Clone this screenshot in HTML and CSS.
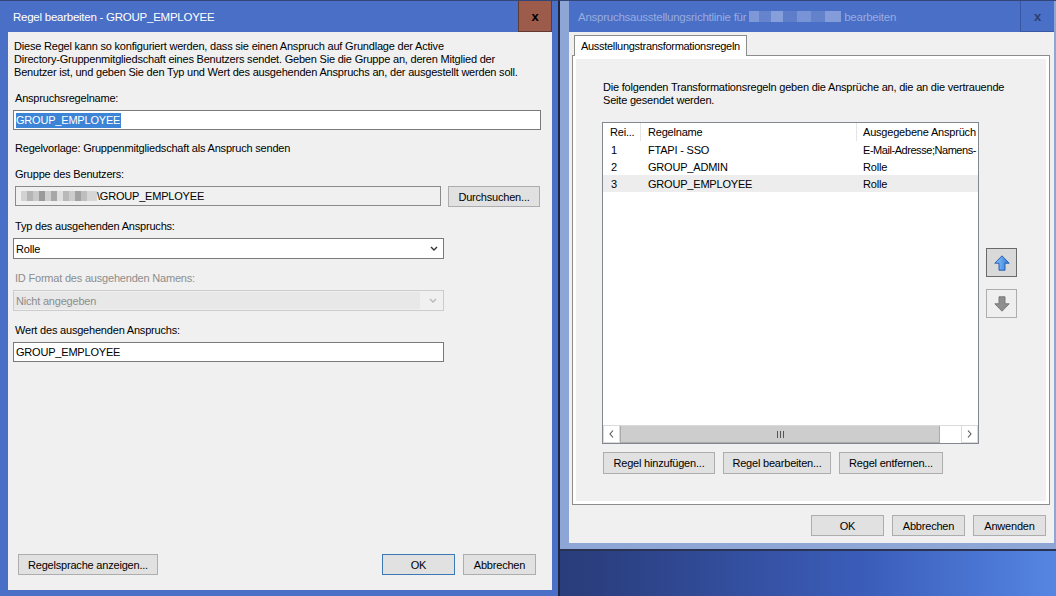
FILE: index.html
```html
<!DOCTYPE html>
<html lang="de">
<head>
    <meta charset="UTF-8">
    <title>Regel bearbeiten - GROUP_EMPLOYEE</title>
    <link rel="stylesheet" href="styles.css">
</head>
<body>
    <!-- Left window: edit single rule -->
    <div class="window rule-window">
        <div class="titlebar">
            <span class="title">Regel bearbeiten - GROUP_EMPLOYEE</span>
            <span class="close-btn">x</span>
        </div>
        <div class="client rule-client">
            <p class="intro">Diese Regel kann so konfiguriert werden, dass sie einen Anspruch auf Grundlage der Active<br>Directory-Gruppenmitgliedschaft eines Benutzers sendet. Geben Sie die Gruppe an, deren Mitglied der<br>Benutzer ist, und geben Sie den Typ und Wert des ausgehenden Anspruchs an, der ausgestellt werden soll.</p>

            <div class="field-label">Anspruchsregelname:</div>
            <div class="textbox full"><span class="selection">GROUP_EMPLOYEE</span></div>

            <div class="template">Regelvorlage: Gruppenmitgliedschaft als Anspruch senden</div>

            <div class="field-label">Gruppe des Benutzers:</div>
            <div class="group-row">
                <div class="textbox readonly"><span class="pixelated"></span>\GROUP_EMPLOYEE</div>
                <button type="button" class="btn browse-btn">Durchsuchen...</button>
            </div>

            <div class="field-label">Typ des ausgehenden Anspruchs:</div>
            <div class="combo">
                <span class="combo-value">Rolle</span>
                <svg class="chevron" width="8" height="5" viewBox="0 0 8 5"><path d="M1 1 L4 4 L7 1" fill="none" stroke="#333" stroke-width="1.4"/></svg>
            </div>

            <div class="field-label disabled">ID Format des ausgehenden Namens:</div>
            <div class="combo disabled">
                <span class="combo-value">Nicht angegeben</span>
                <svg class="chevron" width="8" height="5" viewBox="0 0 8 5"><path d="M1 1 L4 4 L7 1" fill="none" stroke="#b8b8b8" stroke-width="1.4"/></svg>
            </div>

            <div class="field-label">Wert des ausgehenden Anspruchs:</div>
            <div class="textbox half">GROUP_EMPLOYEE</div>

            <div class="dialog-footer">
                <button type="button" class="btn lang-btn">Regelsprache anzeigen...</button>
                <span class="spacer"></span>
                <button type="button" class="btn default">OK</button>
                <button type="button" class="btn">Abbrechen</button>
            </div>
        </div>
    </div>

    <!-- Right window: claim issuance policy -->
    <div class="window policy-window">
        <div class="titlebar inactive">
            <span class="title">Anspruchsausstellungsrichtlinie für <span class="pixelated title-blur"></span> bearbeiten</span>
            <span class="close-btn">x</span>
        </div>
        <div class="client policy-client">
            <div class="tabs">
                <span class="tab">Ausstellungstransformationsregeln</span>
            </div>
            <div class="tab-panel">
                <div class="tab-page">
                    <p class="page-intro">Die folgenden Transformationsregeln geben die Ansprüche an, die an die vertrauende<br>Seite gesendet werden.</p>

                    <div class="list-area">
                        <div class="listview">
                            <div class="list-row list-header">
                                <span class="col col-order">Rei...</span>
                                <span class="col col-name">Regelname</span>
                                <span class="col col-claims">Ausgegebene Ansprüch</span>
                            </div>
                            <div class="list-row">
                                <span class="col col-order">1</span>
                                <span class="col col-name">FTAPI - SSO</span>
                                <span class="col col-claims tight">E-Mail-Adresse;Namens-</span>
                            </div>
                            <div class="list-row">
                                <span class="col col-order">2</span>
                                <span class="col col-name">GROUP_ADMIN</span>
                                <span class="col col-claims">Rolle</span>
                            </div>
                            <div class="list-row selected">
                                <span class="col col-order">3</span>
                                <span class="col col-name">GROUP_EMPLOYEE</span>
                                <span class="col col-claims">Rolle</span>
                            </div>
                            <div class="list-fill"></div>
                            <div class="hscroll">
                                <span class="scroll-arrow">
                                    <svg width="5" height="8" viewBox="0 0 5 8"><path d="M4 0.5 L1 4 L4 7.5" fill="none" stroke="#555" stroke-width="1.1"/></svg>
                                </span>
                                <span class="scroll-thumb">
                                    <span class="grip"></span>
                                </span>
                                <span class="scroll-track"></span>
                                <span class="scroll-arrow">
                                    <svg width="5" height="8" viewBox="0 0 5 8"><path d="M1 0.5 L4 4 L1 7.5" fill="none" stroke="#555" stroke-width="1.1"/></svg>
                                </span>
                            </div>
                        </div>

                        <div class="order-buttons">
                            <button type="button" class="order-btn active">
                                <svg width="16" height="16" viewBox="0 0 16 16">
                                    <defs>
                                        <linearGradient id="blueArrow" x1="0" y1="0" x2="1" y2="0">
                                            <stop offset="0" stop-color="#8cc2f5"/>
                                            <stop offset="0.5" stop-color="#5da2ec"/>
                                            <stop offset="1" stop-color="#2f74d2"/>
                                        </linearGradient>
                                    </defs>
                                    <path d="M8 0.8 L15.2 8.2 L11 8.2 L11 15.2 L5 15.2 L5 8.2 L0.8 8.2 Z" fill="url(#blueArrow)" stroke="#2a5fb0" stroke-width="1"/>
                                </svg>
                            </button>
                            <button type="button" class="order-btn">
                                <svg width="16" height="16" viewBox="0 0 16 16">
                                    <path d="M5 0.8 L11 0.8 L11 7.8 L15.2 7.8 L8 15.2 L0.8 7.8 L5 7.8 Z" fill="#8e8e8e" stroke="#7a7a7a" stroke-width="1"/>
                                </svg>
                            </button>
                        </div>
                    </div>

                    <div class="rule-buttons">
                        <button type="button" class="btn add-btn">Regel hinzufügen...</button>
                        <button type="button" class="btn edit-btn">Regel bearbeiten...</button>
                        <button type="button" class="btn remove-btn">Regel entfernen...</button>
                    </div>
                </div>
            </div>
            <div class="policy-footer">
                <button type="button" class="btn">OK</button>
                <button type="button" class="btn">Abbrechen</button>
                <button type="button" class="btn">Anwenden</button>
            </div>
        </div>
    </div>
</body>
</html>
```

FILE: styles.css
```css
body {
    margin: 0;
    width: 1056px;
    height: 596px;
    overflow: hidden;
    position: relative;
    font-family: "Liberation Sans", Arial, sans-serif;
    font-size: 11px;
    letter-spacing: -0.2px;
    color: #000;
    background: linear-gradient(90deg, #24346a 0%, #2a3d7c 55%, #3b5dba 82%, #5585e2 100%);
}

/* windows on the desktop */
.window {
    position: absolute;
    top: 0;
    box-sizing: border-box;
}
.rule-window {
    left: 0;
    width: 560px;
    height: 596px;
    background: #4a6fc6;
    border-top: 1px solid #33467a;
    border-right: 2px solid #1d2642;
}
.policy-window {
    left: 560px;
    width: 496px;
    height: 551px;
    background: #8ea6d6;
    border-top: 1px solid #33467a;
    border-bottom: 2px solid #2a3352;
    padding: 0 2px 0 9px;
}

.titlebar {
    height: 31px;
    display: flex;
    align-items: center;
    background: #4a6fc6;
    position: relative;
}
.title {
    padding-left: 13px;
    font-size: 11.5px;
    letter-spacing: -0.25px;
    color: #fff;
    white-space: nowrap;
}
.titlebar.inactive .title {
    padding-left: 9px;
    color: #98acdf;
}
.close-btn {
    position: absolute;
    top: 0;
    right: 6px;
    width: 32px;
    height: 30px;
    background: #9d5b4b;
    border: 1px solid #5f3a33;
    border-top: none;
    font-weight: bold;
    font-size: 13px;
    letter-spacing: 0;
    display: flex;
    align-items: center;
    justify-content: center;
    color: #000;
}
.titlebar.inactive .close-btn {
    right: 0;
    width: 33px;
    background: #4a6fc6;
    border: none;
    border-left: 1px solid #3a57a4;
    border-bottom: 1px solid #3a57a4;
    color: #2c3f72;
}

.client {
    background: #f0f0f0;
    box-sizing: border-box;
}

/* left dialog */
.rule-client {
    margin-left: 8px;
    width: 544px;
    height: 558px;
    padding: 8px 11px 15px 5px;
    display: flex;
    flex-direction: column;
}
.intro {
    margin: 0 0 0 1px;
    line-height: 13px;
    white-space: nowrap;
}
.field-label,
.template {
    margin: 12px 0 5px 2px;
    line-height: 14px;
}
.template {
    margin: 11px 0 0 2px;
}
.field-label.disabled {
    color: #8d8d8d;
}

.textbox {
    height: 20px;
    box-sizing: border-box;
    border: 1px solid #7a7a7a;
    background: #fff;
    padding: 0 2px;
    display: flex;
    align-items: center;
    white-space: nowrap;
}
.textbox.full {
    width: 528px;
}
.textbox.half {
    width: 431px;
}
.selection {
    background: #3d84d6;
    color: #fff;
    line-height: 15px;
    padding-right: 1px;
}
.group-row {
    display: flex;
    gap: 7px;
    margin-left: 2px;
}
.textbox.readonly {
    width: 426px;
    background: #f0f0f0;
    border-color: #8a8a8a;
    padding-left: 5px;
}
.pixelated {
    display: inline-block;
    width: 76px;
    height: 10px;
    background: linear-gradient(90deg,
        #d2d2d2 0 6px, #b4b4b4 6px 12px, #c9c9c9 12px 18px, #9b9b9b 18px 24px,
        #cfcfcf 24px 30px, #a7a7a7 30px 36px, #e0e0e0 36px 42px, #b9b9b9 42px 48px,
        #cccccc 48px 54px, #a2a2a2 54px 60px, #bebebe 60px 66px, #d6d6d6 66px 76px);
}
.title-blur {
    width: 92px;
    height: 11px;
    vertical-align: -1px;
    opacity: 0.55;
    background: linear-gradient(90deg,
        #a9b9e6 0 10px, #7c95d2 10px 22px, #b8c6ec 22px 34px, #6f8acb 34px 48px,
        #9fb2e3 48px 62px, #7891d0 62px 76px, #b3c2ea 76px 92px);
}

.combo {
    width: 431px;
    height: 21px;
    box-sizing: border-box;
    border: 1px solid #7a7a7a;
    background: #fff;
    display: flex;
    align-items: center;
    padding: 0 0 0 2px;
}
.combo-value {
    flex: 1;
}
.chevron {
    margin-right: 5px;
}
.combo.disabled {
    border-color: #cccccc;
    background: #f0f0f0;
    color: #8d8d8d;
    padding: 1px 1px 1px 0;
}
.combo.disabled .combo-value {
    align-self: stretch;
    display: flex;
    align-items: center;
    padding-left: 2px;
    background: #e8e8e8;
    margin-right: 9px;
}

/* buttons */
.btn {
    font-family: inherit;
    font-size: 11px;
    letter-spacing: -0.2px;
    color: #000;
    background: #e1e1e1;
    border: 1px solid #adadad;
    height: 21px;
    padding: 0;
    margin: 0;
    box-sizing: border-box;
    width: 73px;
}
.btn.default {
    border-color: #3c78b4;
}
.browse-btn {
    width: 92px;
}
.lang-btn {
    width: 140px;
}
.dialog-footer {
    margin-top: auto;
    display: flex;
    gap: 8px;
    padding: 0 5px;
}
.spacer {
    flex: 1;
}

/* right dialog */
.policy-client {
    width: 485px;
    height: 511px;
    padding: 3px 4px 0 3px;
    display: flex;
    flex-direction: column;
}
.tabs {
    display: flex;
    padding-left: 2px;
    height: 20px;
    position: relative;
    z-index: 1;
}
.tab {
    height: 21px;
    box-sizing: border-box;
    background: #fff;
    border: 1px solid #8c8c8c;
    border-bottom: none;
    padding: 0 6px 0 6px;
    line-height: 20px;
    letter-spacing: -0.3px;
}
.tab-panel {
    height: 450px;
    box-sizing: border-box;
    border: 1px solid #8c8c8c;
    background: #fff;
    padding: 3px;
}
.tab-page {
    height: 100%;
    background: #f0f0f0;
    box-sizing: border-box;
    padding: 22px 0 0 26px;
}
.page-intro {
    margin: 0 0 15px 1px;
    line-height: 13px;
    white-space: nowrap;
}
.list-area {
    display: flex;
    gap: 7px;
}
.listview {
    width: 377px;
    height: 322px;
    box-sizing: border-box;
    border: 1px solid #828790;
    background: #fff;
    display: flex;
    flex-direction: column;
}
.list-row {
    display: grid;
    grid-template-columns: 38px 216px 1fr;
    height: 17px;
    align-items: center;
    white-space: nowrap;
}
.list-row.list-header {
    height: 18px;
}
.list-row.selected {
    background: #ededed;
}
.col {
    overflow: hidden;
    padding-left: 7px;
}
.col-order {
    padding-left: 8px;
}
.list-header .col {
    align-self: stretch;
    line-height: 18px;
    border-right: 1px solid #e5e5e5;
}
.list-header .col-order {
    padding-left: 7px;
}
.col-claims {
    padding-left: 6px;
}
.col-claims.tight {
    letter-spacing: -0.45px;
}
.list-header .col-claims {
    border-right: none;
}
.list-fill {
    flex: 1;
}
.hscroll {
    height: 17px;
    display: flex;
    border-top: 1px solid #dadada;
}
.scroll-arrow {
    width: 17px;
    box-sizing: border-box;
    border: 1px solid #dadada;
    border-top: none;
    background: #fff;
    display: flex;
    align-items: center;
    justify-content: center;
}
.scroll-thumb {
    width: 320px;
    background: #cdcdcd;
    border: 1px solid #ababab;
    border-top: none;
    box-sizing: border-box;
    display: flex;
    align-items: center;
    justify-content: center;
}
.grip {
    width: 7px;
    height: 7px;
    background: linear-gradient(90deg, #555 0 1px, transparent 1px 3px, #555 3px 4px, transparent 4px 6px, #555 6px 7px);
}
.scroll-track {
    flex: 1;
    background: #fff;
}

.order-buttons {
    display: flex;
    flex-direction: column;
    justify-content: center;
    gap: 12px;
}
.order-btn {
    width: 31px;
    height: 29px;
    padding: 0;
    box-sizing: border-box;
    border: 1px solid #adadad;
    background: #efefef;
    display: flex;
    align-items: center;
    justify-content: center;
}
.order-btn.active {
    background: #d9d9d9;
    border-color: #6a6a6a;
}

.rule-buttons {
    display: flex;
    gap: 8px;
    margin: 8px 0 0 1px;
}
.rule-buttons .btn {
    height: 22px;
}
.add-btn {
    width: 112px;
}
.edit-btn {
    width: 108px;
}
.remove-btn {
    width: 104px;
}

.policy-footer {
    display: flex;
    justify-content: flex-end;
    gap: 8px;
    margin-top: 10px;
    padding-right: 4px;
}
```
